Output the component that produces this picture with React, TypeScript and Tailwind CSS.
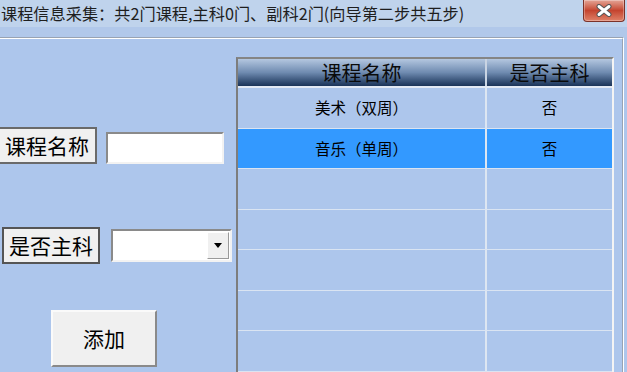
import React from "react";

export default function App() {
  const rows = [
    { name: "美术（双周）", major: "否", sel: false },
    { name: "音乐（单周）", major: "否", sel: true },
    { name: "", major: "", sel: false },
    { name: "", major: "", sel: false },
    { name: "", major: "", sel: false },
    { name: "", major: "", sel: false },
    { name: "", major: "", sel: false },
  ];
  return (
    <div className="w-[627px] h-[372px] overflow-hidden bg-[#adc6ec] flex flex-col font-['Noto_Sans_CJK_SC','Liberation_Sans',sans-serif] text-black">
      {/* title bar */}
      <div className="h-[27px] shrink-0 bg-[#bfd3ec] flex items-start justify-between">
        <span className="text-[16.2px] leading-[26px] text-[#1e1e1e] pl-[1px] whitespace-nowrap">
          课程信息采集：共2门课程,主科0门、副科2门(向导第二步共五步)
        </span>
        <div className="mr-[2px] w-[42px] h-[22px] rounded-b-[4px] border border-t-0 border-[#7b3229] bg-linear-to-b from-[#e3a496] via-[#c4442f] to-[#df8068] flex items-center justify-center shadow-[inset_0_0_0_1px_rgba(255,255,255,0.3)]">
          <svg width="18" height="13" viewBox="0 0 18 13">
            <path d="M4 2.5 L14 10.5 M14 2.5 L4 10.5" stroke="#555" strokeWidth="5" strokeLinecap="round" />
            <path d="M4 2.5 L14 10.5 M14 2.5 L4 10.5" stroke="#fff" strokeWidth="3" strokeLinecap="round" />
          </svg>
        </div>
      </div>
      <div className="h-[10px] shrink-0 bg-[#b1c8ea]" />
      {/* body groupbox */}
      <div className="flex-1 mr-[3px] border-t border-t-[#98a3b3] border-r border-r-white flex">
        <div className="flex-1 border-t border-t-white border-r border-r-[#98a3b3] flex items-start">
          {/* left panel */}
          <div className="w-[236px] shrink-0 flex flex-col">
            <div className="mt-[88px] flex items-start">
              <div className="ml-[-3px] w-[100px] h-[37px] bg-[#f0f0f0] border-2 border-[#6a6a6a] flex items-center justify-center text-[21px] leading-none">
                课程名称
              </div>
              <div className="ml-[9px] mt-[5px] w-[118px] h-[32px] bg-white border-2 border-t-[#8a8a8a] border-l-[#8a8a8a] border-b-[#f2f2f2] border-r-[#f2f2f2]" />
            </div>
            <div className="mt-[63px] flex items-start">
              <div className="ml-[2px] w-[98px] h-[37px] bg-[#f0f0f0] border-2 border-[#555555] flex items-center justify-center text-[21px] leading-none">
                是否主科
              </div>
              <div className="ml-[11px] mt-[2px] w-[121px] h-[33px] bg-white border-2 border-t-[#8a8a8a] border-l-[#8a8a8a] border-b-[#f2f2f2] border-r-[#f2f2f2] flex items-center justify-end pr-[1px]">
                <div className="w-[22px] h-[27px] bg-[#f0f0f0] border border-t-white border-l-white border-b-[#9a9a9a] border-r-[#9a9a9a] flex items-center justify-center">
                  <svg width="8" height="5" viewBox="0 0 8 5">
                    <path d="M0 0 L8 0 L4 5 Z" fill="#000" />
                  </svg>
                </div>
              </div>
            </div>
            <div className="ml-[51px] mt-[46px] w-[106px] h-[57px] bg-[#f0f0f0] border-2 border-t-[#fafafa] border-l-[#fafafa] border-b-[#8a8a8a] border-r-[#8a8a8a] flex items-center justify-center text-[21px] leading-none">
              添加
            </div>
          </div>
          {/* table */}
          <div className="mt-[18px] w-[378px] shrink-0 border-t-2 border-l-2 border-r-2 border-t-[#858585] border-l-[#7d7d7d] border-r-[#f4f4f4]">
            <div className="h-[27px] flex bg-linear-to-b from-[#b4c7e0] via-[#6f8bb0] to-[#1a3358] border-b-2 border-b-[#e2e9f4] box-content">
              <div className="w-[249px] border-r-2 border-r-[#c9d4e3] flex items-center justify-center text-[20px] leading-none text-[#0a0a0a]">
                课程名称
              </div>
              <div className="flex-1 flex items-center justify-center text-[20px] leading-none text-[#0a0a0a]">
                是否主科
              </div>
            </div>
            {rows.map((r, i) => (
              <div
                key={i}
                className={
                  "h-[40.5px] flex border-b border-b-[#dae4f2] " +
                  (r.sel ? "bg-[#3399ff]" : "bg-[#adc6ec]")
                }
              >
                <div className="w-[249px] border-r-2 border-r-[#dde6f2] flex items-center justify-center text-[15.5px] leading-none">
                  {r.name}
                </div>
                <div className="flex-1 flex items-center justify-center text-[15.5px] leading-none">
                  {r.major}
                </div>
              </div>
            ))}
          </div>
        </div>
      </div>
    </div>
  );
}
